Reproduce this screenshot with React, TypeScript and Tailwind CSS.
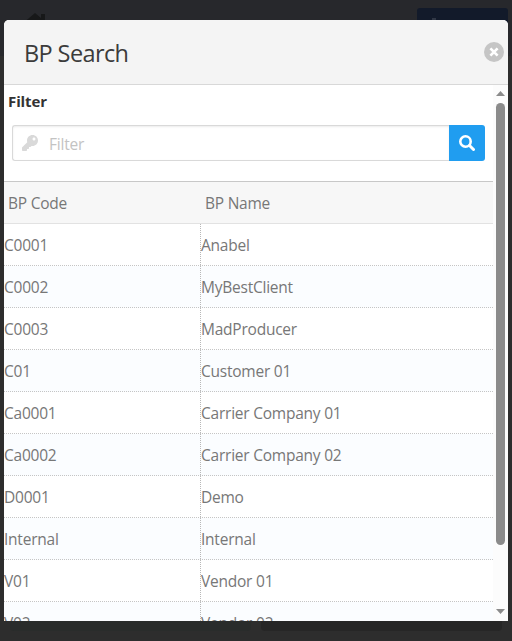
import { FaKey } from "react-icons/fa";

const partners = [
  ["C0001", "Anabel"],
  ["C0002", "MyBestClient"],
  ["C0003", "MadProducer"],
  ["C01", "Customer 01"],
  ["Ca0001", "Carrier Company 01"],
  ["Ca0002", "Carrier Company 02"],
  ["D0001", "Demo"],
  ["Internal", "Internal"],
  ["V01", "Vendor 01"],
  ["V02", "Vendor 02"],
];

function Backdrop() {
  return (
    <div className="absolute inset-0 flex flex-col bg-[#2d2d2d]">
      <div className="flex h-14 justify-between bg-[#27282c] pr-1 pl-[22px]">
        <svg className="mt-[13px] h-6 w-[26px]" viewBox="0 0 26 24" fill="#171819">
          <path d="M13 0 19 5V1H23V8L26 11 23 14V24H3V14L0 11Z" />
        </svg>
        <div className="mt-2 h-9 w-[91px] rounded-[3px] bg-[#121a2a] pt-2.5 pl-[15px]">
          <div className="h-4 w-1 bg-[#303745]" />
        </div>
      </div>
      <div className="mt-auto flex h-10 gap-2.5 pr-[10px] pb-[10px] pl-2.5">
        <div className="h-[30px] w-[241px] rounded bg-[#292c2b]" />
        <div className="h-[30px] flex-1 rounded bg-[#262626]" />
      </div>
    </div>
  );
}

function ScrollBar() {
  return (
    <div className="flex w-[15px] shrink-0 flex-col items-center bg-[#fcfcfc] pt-1.5">
      <svg className="h-[5px] w-[9px] shrink-0" viewBox="0 0 9 5" fill="#8b8b8b">
        <path d="M4.5 0 9 5H0Z" />
      </svg>
      <div className="mt-[7px] h-[442px] w-[9px] shrink-0 rounded-full bg-[#8b8b8b]" />
      <svg className="mt-auto mb-[7px] h-[5px] w-[9px] shrink-0" viewBox="0 0 9 5" fill="#8b8b8b">
        <path d="M0 0H9L4.5 5Z" />
      </svg>
    </div>
  );
}

export default function App() {
  return (
    <div className="relative h-[641px] w-[512px] overflow-hidden px-1 pt-5 font-['Open_Sans','Noto_Sans',sans-serif] text-[15.5px] tracking-[-0.23px] text-[#777]">
      <Backdrop />
      <section className="relative flex h-[601px] flex-col overflow-hidden rounded-t-[5px] bg-white">
        <header className="flex h-[65px] shrink-0 items-center justify-between border-b border-[#d8d8d8] bg-[#f4f4f4] pr-1 pl-5">
          <h1 className="pt-0.5 text-[23.5px] leading-8 tracking-[-0.6px] text-[#3b3b3b]">BP Search</h1>
          <svg className="size-5" viewBox="0 0 20 20">
            <circle cx="10" cy="10" r="10" fill="#c5c5c5" />
            <path d="M6.4 6.4 13.6 13.6M13.6 6.4 6.4 13.6" stroke="#fff" strokeWidth="2.7" />
          </svg>
        </header>
        <div className="flex min-h-0 flex-1">
          <main className="flex min-w-0 flex-1 flex-col overflow-hidden">
            <h2 className="mt-[5px] h-[23px] shrink-0 pl-1 text-[15px] leading-[22px] font-bold tracking-[-0.1px] text-[#333]">
              Filter
            </h2>
            <div className="mt-3 mr-2 ml-2 flex h-9 shrink-0">
              <div className="flex flex-1 items-center rounded-l-[3px] border border-r-0 border-[#d9d9d9] pl-[9px] shadow-[inset_0_1px_2px_rgba(0,0,0,0.08)]">
                <FaKey className="size-4 text-[#d9d9d9]" />
                <span className="ml-[11px] pt-[3px] text-[#c3c3c3]">Filter</span>
              </div>
              <button className="flex w-9 items-center justify-center rounded-r-[3px] bg-[#209df0]">
                <svg className="size-4" viewBox="0 0 16 16" fill="none" stroke="#fff">
                  <circle cx="6.5" cy="6.5" r="5.2" strokeWidth="2.6" />
                  <path d="m10.5 10.5 4 4" strokeWidth="3" strokeLinecap="round" />
                </svg>
              </button>
            </div>
            <div className="mt-5 flex h-[43px] shrink-0 items-center border-t border-b border-t-[#c8c8c8] border-b-[#e2e2e2] bg-[#f7f7f7] pt-0.5 pl-1">
              <span className="w-[197px]">BP Code</span>
              <span>BP Name</span>
            </div>
            <div className="shrink-0">
              {partners.map(([code, name]) => (
                <div
                  key={code}
                  className="flex h-[42px] border-b border-dotted border-[#c5c5c5] bg-white leading-[42px] even:bg-[#fbfdff]"
                >
                  <span className="w-[197px] border-r border-dotted border-[#b8b8b8]">{code}</span>
                  <span>{name}</span>
                </div>
              ))}
            </div>
          </main>
          <ScrollBar />
        </div>
      </section>
    </div>
  );
}
